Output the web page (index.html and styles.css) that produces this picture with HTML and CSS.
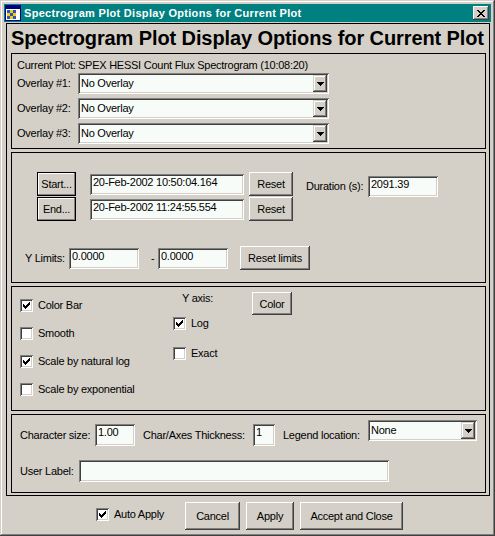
FILE: index.html
```html
<!DOCTYPE html>
<html>
<head>
<meta charset="utf-8">
<title>Spectrogram Plot Display Options</title>
<link rel="stylesheet" href="styles.css">
</head>
<body>
<div class="window">
  <div class="titlebar">
    <svg class="app-icon" width="16" height="16" viewBox="0 0 16 16">
      <rect x="0.5" y="0.5" width="15" height="15" fill="#fff" stroke="#000080"/>
      <rect x="1" y="1" width="14" height="3" fill="#000080"/>
      <rect x="2" y="5" width="3" height="3" fill="#3050c8"/>
      <rect x="5" y="5" width="3" height="3" fill="#f0d000"/>
      <rect x="8" y="5" width="3" height="3" fill="#3050c8"/>
      <rect x="2" y="8" width="3" height="3" fill="#f0d000"/>
      <rect x="5" y="8" width="3" height="3" fill="#3050c8"/>
      <rect x="8" y="8" width="3" height="3" fill="#f0d000"/>
      <rect x="2" y="11" width="3" height="3" fill="#3050c8"/>
      <rect x="5" y="11" width="3" height="3" fill="#f0d000"/>
      <rect x="8" y="11" width="3" height="3" fill="#3050c8"/>
    </svg>
    <span class="title">Spectrogram Plot Display Options for Current Plot</span>
    <div class="close">
      <svg width="8" height="7" viewBox="0 0 8 7"><path fill="#000" d="M0 0h2v1h-2zM6 0h2v1h-2zM1 1h2v1h-2zM5 1h2v1h-2zM2 2h4v1h-4zM3 3h2v1h-2zM2 4h4v1h-4zM1 5h2v1h-2zM5 5h2v1h-2zM0 6h2v1h-2zM6 6h2v1h-2z"/></svg>
    </div>
  </div>

  <div class="main">
    <h1 class="heading">Spectrogram Plot Display Options for Current Plot</h1>

    <section class="panel p-overlay">
      <div class="current"><span class="lbl w61">Current Plot:</span><span>SPEX HESSI Count Flux Spectrogram (10:08:20)</span></div>
      <div class="orow"><span class="lbl w61 lh21">Overlay #1:</span>
        <div class="combo w251"><span class="combo-text">No Overlay</span><span class="drop"><svg width="7" height="4" viewBox="0 0 7 4"><path d="M0 0h7v1h-1v1h-1v1h-1v1h-1v-1h-1v-1h-1v-1h-1z"/></svg></span></div>
      </div>
      <div class="orow"><span class="lbl w61 lh21">Overlay #2:</span>
        <div class="combo w251"><span class="combo-text">No Overlay</span><span class="drop"><svg width="7" height="4" viewBox="0 0 7 4"><path d="M0 0h7v1h-1v1h-1v1h-1v1h-1v-1h-1v-1h-1v-1h-1z"/></svg></span></div>
      </div>
      <div class="orow"><span class="lbl w61 lh21">Overlay #3:</span>
        <div class="combo w251"><span class="combo-text">No Overlay</span><span class="drop"><svg width="7" height="4" viewBox="0 0 7 4"><path d="M0 0h7v1h-1v1h-1v1h-1v1h-1v-1h-1v-1h-1v-1h-1z"/></svg></span></div>
      </div>
    </section>

    <section class="panel p-time">
      <div class="timegrid">
        <div class="btn default b-start">Start...</div>
        <div class="field w154">20-Feb-2002 10:50:04.164</div>
        <div class="btn b-reset">Reset</div>
        <div class="duration"><span class="lbl w62 lh21">Duration (s):</span><div class="field w70">2091.39</div></div>
        <div class="btn default b-start">End...</div>
        <div class="field w154">20-Feb-2002 11:24:55.554</div>
        <div class="btn b-reset">Reset</div>
      </div>
      <div class="ylim">
        <span class="lbl w44">Y Limits:</span>
        <div class="field w70">0.0000</div>
        <span class="dash">-</span>
        <div class="field w70">0.0000</div>
        <div class="btn b-limits">Reset limits</div>
      </div>
    </section>

    <section class="panel p-opts">
      <div class="col-left">
        <div class="chk"><span class="box"><svg width="7" height="7" viewBox="0 0 7 7"><path d="M0 2h1v3h-1zM1 3h1v3h-1zM2 4h1v3h-1zM3 3h1v3h-1zM4 2h1v3h-1zM5 1h1v3h-1zM6 0h1v3h-1z"/></svg></span><span class="chk-lbl">Color Bar</span></div>
        <div class="chk"><span class="box"></span><span class="chk-lbl">Smooth</span></div>
        <div class="chk"><span class="box"><svg width="7" height="7" viewBox="0 0 7 7"><path d="M0 2h1v3h-1zM1 3h1v3h-1zM2 4h1v3h-1zM3 3h1v3h-1zM4 2h1v3h-1zM5 1h1v3h-1zM6 0h1v3h-1z"/></svg></span><span class="chk-lbl">Scale by natural log</span></div>
        <div class="chk"><span class="box"></span><span class="chk-lbl">Scale by exponential</span></div>
      </div>
      <div class="col-mid">
        <div class="yaxis">Y axis:</div>
        <div class="chk c-log"><span class="box"><svg width="7" height="7" viewBox="0 0 7 7"><path d="M0 2h1v3h-1zM1 3h1v3h-1zM2 4h1v3h-1zM3 3h1v3h-1zM4 2h1v3h-1zM5 1h1v3h-1zM6 0h1v3h-1z"/></svg></span><span class="chk-lbl">Log</span></div>
        <div class="chk c-exact"><span class="box"></span><span class="chk-lbl">Exact</span></div>
      </div>
      <div class="btn b-color">Color</div>
    </section>

    <section class="panel p-text">
      <div class="trow">
        <span class="lbl w75 lh22 mt4">Character size:</span>
        <div class="field w40 h22 mt4">1.00</div>
        <span class="lbl w110 lh22 mt4 ml8">Char/Axes Thickness:</span>
        <div class="field w22 h22 mt4">1</div>
        <span class="lbl w85 lh22 mt4 ml8">Legend location:</span>
        <div class="combo w109 h22"><span class="combo-text">None</span><span class="drop"><svg width="7" height="4" viewBox="0 0 7 4"><path d="M0 0h7v1h-1v1h-1v1h-1v1h-1v-1h-1v-1h-1v-1h-1z"/></svg></span></div>
      </div>
      <div class="urow">
        <span class="lbl w59 lh22">User Label:</span>
        <div class="field w310 h22"></div>
      </div>
    </section>
  </div>

  <div class="footer">
    <div class="chk f-chk"><span class="box"><svg width="7" height="7" viewBox="0 0 7 7"><path d="M0 2h1v3h-1zM1 3h1v3h-1zM2 4h1v3h-1zM3 3h1v3h-1zM4 2h1v3h-1zM5 1h1v3h-1zM6 0h1v3h-1z"/></svg></span><span class="chk-lbl auto">Auto Apply</span></div>
    <div class="btn f-btn w55">Cancel</div>
    <div class="btn f-btn w48 ml6">Apply</div>
    <div class="btn f-btn w103 ml6">Accept and Close</div>
  </div>
</div>
</body>
</html>
```

FILE: styles.css
```css
* { box-sizing: border-box; }

body {
  margin: 0;
  background: #d4d0c8;
  font-family: "Liberation Sans", Arial, sans-serif;
  font-size: 11px;
  letter-spacing: -0.25px;
  color: #000;
}

.window {
  width: 495px;
  height: 536px;
  padding: 4px;
  background: #d4d0c8;
  box-shadow: inset -1px -1px #404040, inset 1px 1px #d4d0c8, inset -2px -2px #808080, inset 2px 2px #ffffff;
  display: flex;
  flex-direction: column;
}

/* title bar */
.titlebar {
  height: 18px;
  background: #008080;
  color: #fff;
  display: flex;
  align-items: center;
  padding: 0 2px 0 1px;
}
.app-icon { display: block; flex: none; }
.title {
  margin-left: 3px;
  font-weight: bold;
  font-size: 11px;
  letter-spacing: 0.3px;
  line-height: 18px;
  white-space: nowrap;
}
.close {
  margin-left: auto;
  width: 16px;
  height: 14px;
  background: #d4d0c8;
  box-shadow: inset -1px -1px #404040, inset 1px 1px #ffffff, inset -2px -2px #808080, inset 2px 2px #d4d0c8;
  display: flex;
  align-items: center;
  justify-content: center;
}
.close svg { display: block; margin-left: -1px; }

/* main framed area */
.main {
  margin: 1px 1px 0 2px;
  border: 1px solid #000;
  height: 473px;
  padding: 0 3px 0 4px;
}
.heading {
  margin: 0;
  height: 29px;
  font-size: 20px;
  line-height: 29px;
  font-weight: bold;
  letter-spacing: -0.1px;
  white-space: nowrap;
}

.panel {
  border: 1px solid #000;
  margin-bottom: 3px;
}

/* common widgets */
.lbl { display: inline-block; flex: none; white-space: nowrap; }
.w44 { width: 44px; }
.w59 { width: 59px; }
.w61 { width: 61px; }
.w62 { width: 62px; }
.w75 { width: 75px; }
.w85 { width: 85px; }
.w110 { width: 110px; }
.lh21 { line-height: 21px; }
.lh22 { line-height: 22px; }
.mt4 { margin-top: 4px; }
.ml8 { margin-left: 8px; }
.ml6 { margin-left: 6px; }

.field {
  flex: none;
  height: 21px;
  background: #f8fcf8;
  box-shadow: inset 1px 1px #808080, inset -1px -1px #ffffff, inset 2px 2px #404040, inset -2px -2px #d4d0c8;
  padding: 2px 2px 0 3px;
  line-height: 13px;
  white-space: nowrap;
  overflow: hidden;
}
.w22 { width: 22px; }
.w40 { width: 40px; }
.w70 { width: 70px; }
.w154 { width: 154px; }
.w310 { width: 310px; }
.h22 { height: 22px; }

.combo {
  flex: none;
  height: 21px;
  background: #f8fcf8;
  box-shadow: inset 1px 1px #808080, inset -1px -1px #ffffff, inset 2px 2px #404040, inset -2px -2px #d4d0c8;
  padding: 2px;
  display: flex;
}
.w251 { width: 251px; }
.w109 { width: 109px; }
.combo-text {
  flex: 1;
  padding-left: 1px;
  line-height: 17px;
  white-space: nowrap;
}
.drop {
  flex: none;
  width: 14px;
  background: #d4d0c8;
  box-shadow: inset -1px -1px #404040, inset 1px 1px #d4d0c8, inset -2px -2px #808080, inset 2px 2px #ffffff;
  display: flex;
  align-items: center;
  justify-content: center;
}
.drop svg { display: block; fill: #000; margin-top: 1px; }

.btn {
  flex: none;
  background: #d4d0c8;
  box-shadow: inset -1px -1px #404040, inset 1px 1px #ffffff, inset -2px -2px #808080, inset 2px 2px #d4d0c8;
  display: flex;
  align-items: center;
  justify-content: center;
  white-space: nowrap;
}
.btn.default {
  box-shadow: inset 0 0 0 1px #000000, inset -2px -2px #808080, inset 2px 2px #ffffff;
}

.chk { display: flex; align-items: center; height: 13px; }
.box {
  flex: none;
  width: 13px;
  height: 13px;
  background: #ffffff;
  box-shadow: inset 1px 1px #808080, inset -1px -1px #ffffff, inset 2px 2px #404040, inset -2px -2px #d4d0c8;
  padding: 3px;
}
.box svg { display: block; fill: #000; }
.chk-lbl { margin-left: 5px; line-height: 13px; white-space: nowrap; }

/* overlay panel */
.p-overlay {
  height: 96px;
  padding: 4px 0 0 5px;
}
.current { display: flex; line-height: 15px; height: 15px; }
.orow { display: flex; height: 21px; margin-bottom: 4px; }

/* time panel */
.p-time {
  height: 131px;
  padding: 19px 0 0 13px;
}
.timegrid {
  margin-left: 12px;
  display: grid;
  grid-template-columns: 53px 159px 57px auto;
  grid-template-rows: 24px 24px;
  row-gap: 1px;
  align-items: center;
}
.b-start { width: 39px; height: 24px; }
.b-reset { width: 44px; height: 24px; }
.duration {
  grid-column: 4;
  grid-row: 1;
  align-self: start;
  margin-top: 4px;
  display: flex;
}
.ylim {
  margin-top: 25px;
  display: flex;
  align-items: center;
  height: 24px;
}
.dash { width: 19px; padding-left: 12px; flex: none; }
.b-limits { width: 70px; height: 24px; margin-left: 12px; }

/* options panel */
.p-opts {
  height: 125px;
  padding-left: 8px;
  display: flex;
  align-items: flex-start;
}
.col-left { width: 153px; margin-top: 12px; }
.col-left .chk { margin-bottom: 15px; }
.col-mid { width: 79px; margin-top: 5px; }
.yaxis { margin-left: 9px; line-height: 13px; height: 13px; }
.c-log { margin-top: 12px; }
.c-exact { margin-top: 17px; }
.b-color { width: 40px; height: 23px; margin-top: 5px; }

/* text panel */
.p-text {
  height: 79px;
  padding: 5px 0 0 8px;
}
.trow { display: flex; align-items: flex-start; height: 26px; }
.urow { display: flex; margin-top: 14px; }

/* footer */
.footer {
  display: flex;
  align-items: flex-start;
  padding: 6px 0 0 92px;
}
.f-chk { margin-top: 6px; width: 89px; }
.f-btn { height: 28px; }
.w55 { width: 55px; }
.w48 { width: 48px; }
.w103 { width: 103px; }
```
